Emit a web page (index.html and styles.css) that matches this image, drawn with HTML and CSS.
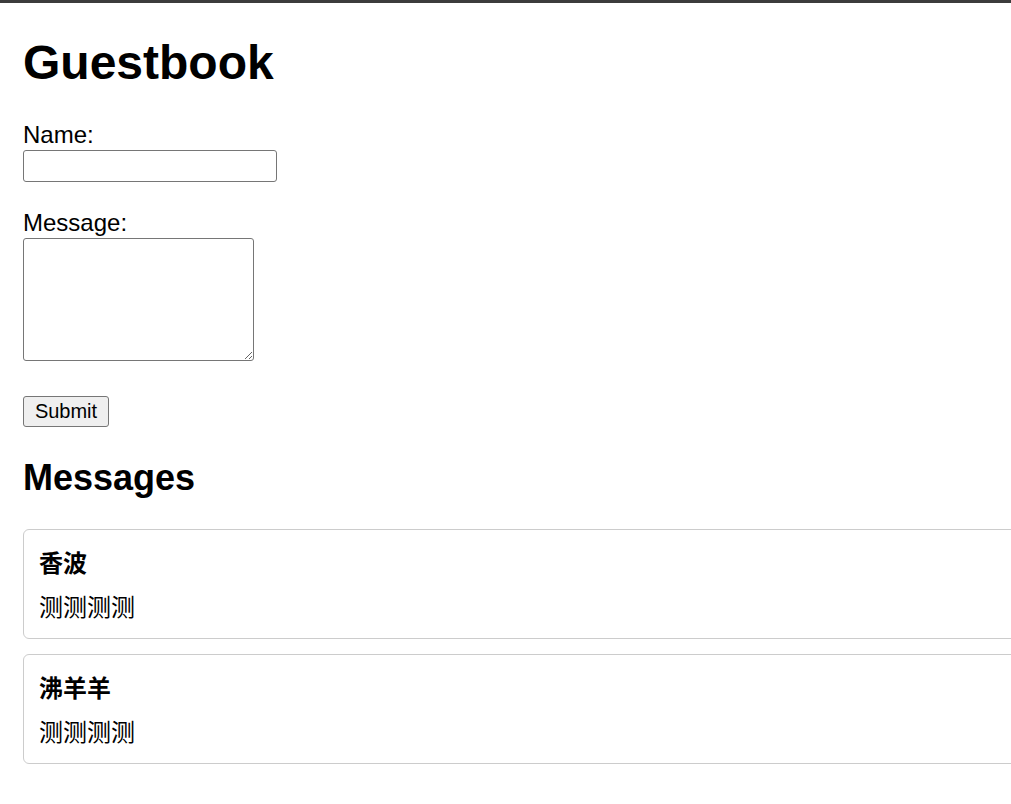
FILE: index.html
```html
<!DOCTYPE html>
<html>
<head>
  <meta charset="utf-8">
  <title>Guestbook</title>
  <link rel="stylesheet" href="styles.css">
</head>
<body>
  <h1>Guestbook</h1>

  <!-- Form for new entries -->
  <form id="guestForm" class="guest-form">
    <label for="name">Name:</label>
    <input type="text" id="name" class="name-input">
    <label for="message" class="message-label">Message:</label>
    <textarea id="message" class="message-input"></textarea>
    <button type="submit" class="submit-btn">Submit</button>
  </form>

  <h2>Messages</h2>

  <!-- List of entries -->
  <div id="messages">
    <div class="message">
      <div class="message-name">香波</div>
      <div class="message-text">测测测测</div>
    </div>
    <div class="message">
      <div class="message-name">沸羊羊</div>
      <div class="message-text">测测测测</div>
    </div>
  </div>
</body>
</html>
```

FILE: styles.css
```css
html {
  overflow-x: hidden;
}
body {
  margin: 0;
  padding: 0 0 20px 23px;
  border-top: 3px solid #3c3c3c; /* dark strip on top */
  font-family: "Liberation Sans", Arial, "Noto Sans CJK SC", sans-serif;
  color: #000;
  background-color: #fff;
}
h1 {
  margin: 32px 0 30px;
  font-size: 48px;
  line-height: 56px;
}
h2 {
  margin: 30px 0 30px;
  font-size: 36px;
  line-height: 42px;
}
.guest-form {
  display: flex;
  flex-direction: column;
  align-items: flex-start;
}
.guest-form label {
  font-size: 24px;
  line-height: 28px;
}
.message-label {
  margin-top: 27px;
}
.name-input {
  box-sizing: border-box;
  width: 254px;
  height: 32px;
  margin: 1px 0 0;
  border: 1px solid #767676;
  border-radius: 3px;
  font-size: 20px;
}
.message-input {
  box-sizing: border-box;
  width: 231px;
  height: 123px;
  margin: 1px 0 0;
  border: 1px solid #767676;
  border-radius: 3px;
  font-size: 20px;
}
.submit-btn {
  box-sizing: border-box;
  margin-top: 35px;
  width: 86px;
  height: 31px;
  padding: 0;
  border: 1px solid #767676;
  border-radius: 3px;
  background-color: #efefef;
  font-family: "Liberation Sans", Arial, sans-serif;
  font-size: 20px;
  color: #000;
}
.message {
  width: 100%;
  padding: 15px 15px 16px;
  margin-bottom: 15px;
  border: 1px solid #ccc;
  border-radius: 6px;
}
.message-name {
  margin-top: 5px;
  font-size: 24px;
  line-height: 28px;
  font-weight: bold;
}
.message-text {
  margin-top: 16px;
  font-size: 24px;
  line-height: 28px;
}
```
